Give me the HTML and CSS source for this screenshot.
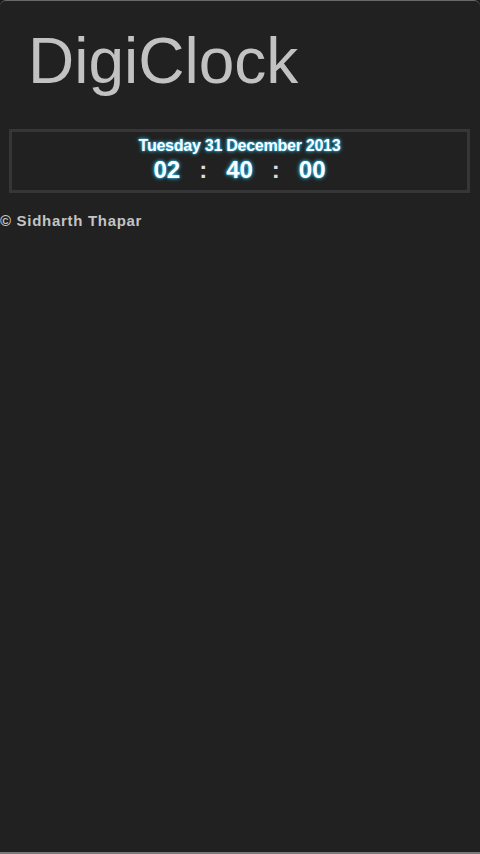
FILE: index.html
```html
<!DOCTYPE html>
<html lang="en">
  <head>
    <meta charset="UTF-8" />
    <meta name="viewport" content="width=device-width, initial-scale=1.0" />
    <title>DigiClock</title>
    <link rel="stylesheet" href="styles.css">
  </head>
  <body>
    <div class="screen">
      <h1 class="title">DigiClock</h1>
      <div class="clock">
        <div class="date">Tuesday 31 December 2013</div>
        <div class="time">
          <span>02</span><span class="sep">:</span><span>40</span><span class="sep">:</span><span>00</span>
        </div>
      </div>
      <div class="credit">&copy; Sidharth Thapar</div>
    </div>
  </body>
</html>
```

FILE: styles.css
```css
html,
body {
  margin: 0;
  height: 100%;
  background-color: #1a1a1a;
}

body {
  font-family: "Liberation Sans", Arial, sans-serif;
}

.screen {
  box-sizing: border-box;
  height: 854px;
  background-color: #212121;
  border-top: 1px solid #6a6a6a;
  border-bottom: 2px solid #7a7a7a;
  border-radius: 6px 6px 0 0;
}

.title {
  margin: 0;
  padding: 24px 0 0 28px;
  font-size: 64px;
  font-weight: normal;
  line-height: 72px;
  color: #c2c2c2;
}

.clock {
  margin: 32px 10px 0 9px;
  border: 3px solid #363636;
  height: 64px;
  box-sizing: border-box;
  text-align: center;
  color: #fff;
  font-weight: bold;
  text-shadow: 0 0 4px #2fc8ff, 0 0 2px #2fc8ff;
}

.date {
  padding-top: 5px;
  font-size: 16px;
  line-height: 18px;
  letter-spacing: -0.25px;
}

.time {
  display: flex;
  justify-content: center;
  gap: 19px;
  margin-top: 3px;
  font-size: 24px;
  line-height: 24px;
}

.time .sep {
  color: #ddd;
  text-shadow: none;
}

.credit {
  margin-top: 19px;
  font-size: 15px;
  font-weight: bold;
  line-height: 18px;
  color: #c4c4c4;
  letter-spacing: 0.7px;
}
```
